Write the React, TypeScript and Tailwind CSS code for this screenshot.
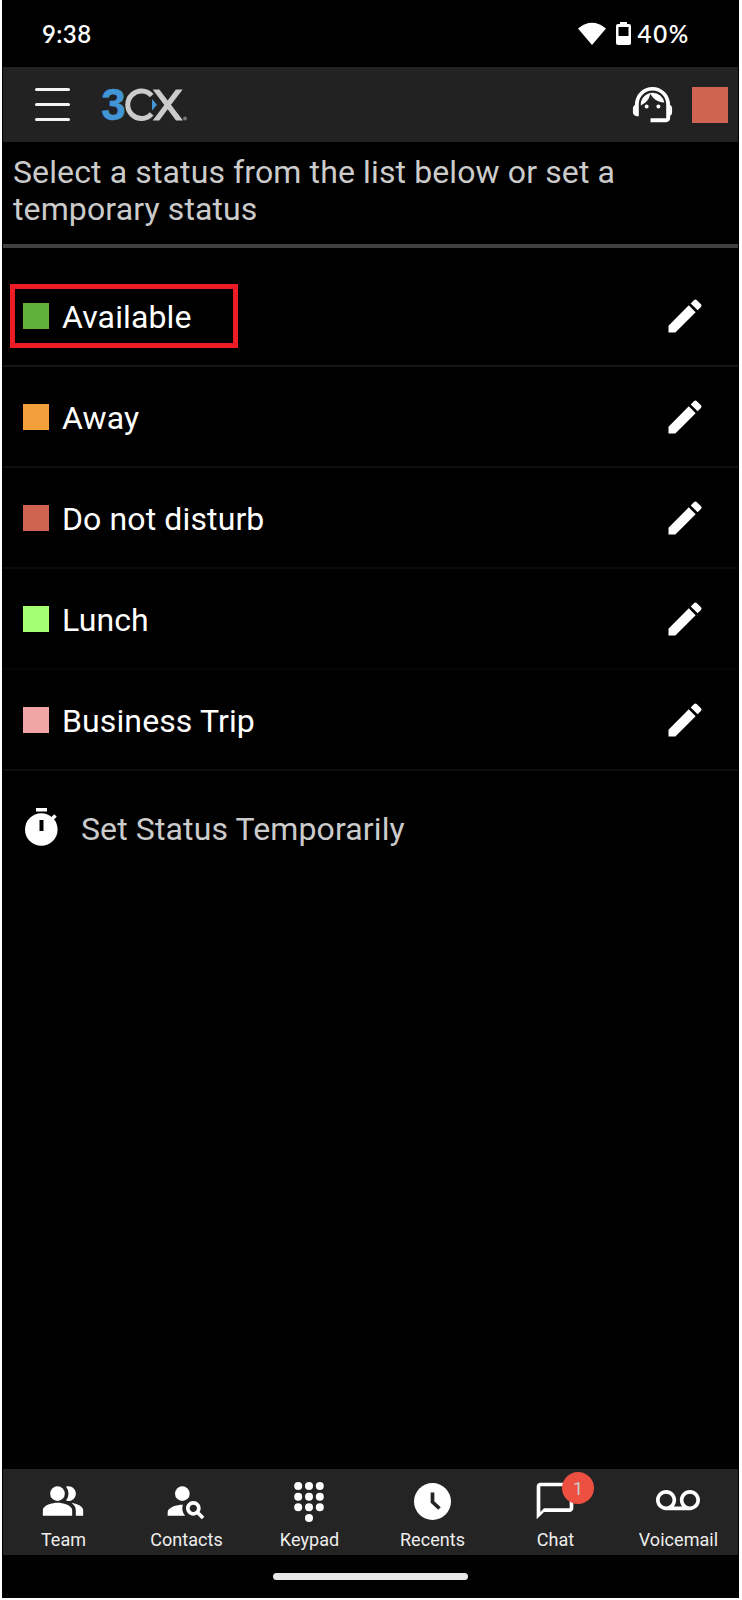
import React from 'react';
import { MdSupportAgent, MdEdit, MdPeopleAlt, MdPersonSearch, MdChatBubbleOutline, MdVoicemail } from 'react-icons/md';

const statuses = [
  { name: 'Available', swatch: 'bg-[#5fb139]', line: 'bg-[#161616]' },
  { name: 'Away', swatch: 'bg-[#f3a03c]', line: 'bg-[#101010]' },
  { name: 'Do not disturb', swatch: 'bg-[#d16353]', line: 'bg-[#0b0b0b]' },
  { name: 'Lunch', swatch: 'bg-[#a5ff75]', line: 'bg-[#060606]' },
  { name: 'Business Trip', swatch: 'bg-[#f2a5a5]', line: 'bg-[#0e0e0e]' },
];

function Logo() {
  return (
    <svg className="ml-8 h-[34px] w-[86px] overflow-visible" viewBox="0 0 86 34">
      <text x="-0.700" y="32" fontFamily="Liberation Sans, sans-serif" fontWeight="700" fontSize="44" fill="#4296d5" stroke="#4296d5" strokeWidth="0.500">3</text>
      <path d="M49.700 7.600A13.700 13.700 0 1 0 49.700 25.800" fill="none" stroke="#cbcbcb" strokeWidth="5" />
      <path d="M50 11L55 16.800L50 22.500Z" fill="#4296d5" />
      <path d="M50.700 1.500H57.300L65.700 12.500L73.900 1.500H80.700L69 16.800L81 32.500H74L65.700 21.300L57.300 32.500H50.700L62.300 17Z" fill="#cbcbcb" />
      <circle cx="83" cy="30.500" r="1.900" fill="#777" />
    </svg>
  );
}

function Keypad() {
  return (
    <svg className="mt-0.5 h-10 w-8 fill-white" viewBox="0 0 32 40">
      {[4, 14.7, 25.3].map((y) => [5.2, 16, 26.8].map((x) => <circle key={`${x}-${y}`} cx={x} cy={y} r="4" />))}
      <circle cx="16" cy="36" r="4" />
    </svg>
  );
}

function Clock() {
  return (
    <svg className="h-[37px] w-[37px]" viewBox="0 0 37 37">
      <circle cx="18.500" cy="18.500" r="18.500" fill="#fff" />
      <path d="M18.500 9.500V19L25.500 25.500" fill="none" stroke="#242424" strokeWidth="3.700" />
    </svg>
  );
}

function Stopwatch() {
  return (
    <svg className="ml-[21px] h-[40px] w-[36px]" viewBox="0 0 36 40">
      <rect x="12" y="1" width="11" height="3.500" fill="#fff" />
      <circle cx="17.300" cy="22.500" r="16.300" fill="#fff" />
      <path d="M28 12L31.500 8.500" stroke="#fff" strokeWidth="3.500" />
      <rect x="15.500" y="13" width="4" height="11" fill="#000" />
    </svg>
  );
}

const tabs = [
  { name: 'Team', icon: <MdPeopleAlt size={44} /> },
  { name: 'Contacts', icon: <MdPersonSearch size={44} /> },
  { name: 'Keypad', icon: <Keypad /> },
  { name: 'Recents', icon: <Clock /> },
  { name: 'Chat', icon: <MdChatBubbleOutline size={44} /> },
  { name: 'Voicemail', icon: <MdVoicemail size={44} /> },
];

export default function App() {
  return (
    <div className="h-[1600px] w-[742px] bg-white pr-[3px] pb-[2px] pl-[2px] font-[Roboto,sans-serif] text-white">
      <div className="flex h-full flex-col bg-black pr-px pl-px">
        <div className="flex h-[67px] shrink-0 items-center pr-[48px] pl-[39px] text-[24px] font-semibold">
          <span className="grow font-['Lato',sans-serif] tracking-[0.4px]">9:38</span>
          <svg className="h-[24px] w-[28px]" viewBox="0 0 28 24"><path d="M0 6.500Q14-5 28 6.500L14 23Z" fill="#fff" /></svg>
          <svg className="mr-[7px] ml-[10px] h-[23px] w-[15px]" viewBox="0 0 15 23"><path fillRule="evenodd" d="M4 0H11V2H13Q15 2 15 4V21Q15 23 13 23H2Q0 23 0 21V4Q0 2 2 2H4ZM2.500 5V14H12.500V5Z" fill="#fff" /></svg>
          <span className="font-['Lato',sans-serif] tracking-[1.7px]">40%</span>
        </div>
        <header className="flex h-[75px] shrink-0 items-center bg-[#222]">
          <div className="ml-8 flex w-[35px] flex-col gap-3">
            <span className="h-[3px] rounded-full bg-[#f4f4f4]" />
            <span className="h-[3px] rounded-full bg-[#f4f4f4]" />
            <span className="h-[3px] rounded-full bg-[#f4f4f4]" />
          </div>
          <Logo />
          <MdSupportAgent className="mr-[16px] ml-auto" size={47} />
          <div className="mr-[10px] h-9 w-9 bg-[#d16353]" />
        </header>
        <p className="h-[102px] shrink-0 pt-[12px] pl-[10px] text-[32px] leading-[37px] tracking-[0.12px] text-[#cbcbcb]">Select a status from the list below or set a<br />temporary status</p>
        <div className="h-1 shrink-0 bg-[#414141]" />
        <ul className="pt-[18px]">
          {statuses.map((s, i) => (
            <li key={s.name} className="relative flex h-[101px] flex-col">
              {i === 0 && <div className="absolute top-[18px] left-[7px] h-[64px] w-[228px] border-5 border-[#ed1c24]" />}
              <div className="flex grow items-center pl-5">
                <span className={`h-[26px] w-[26px] ${s.swatch}`} />
                <span className="ml-[13px] grow pt-0.5 text-[32px] tracking-[0.12px]">{s.name}</span>
                <MdEdit className="mr-[31px]" size={44} />
              </div>
              <div className={`h-0.5 ${s.line}`} />
            </li>
          ))}
        </ul>
        <div className="flex h-[112px] items-center text-[#cbcbcb]">
          <Stopwatch />
          <span className="ml-[21px] pt-1 text-[32px] tracking-[0.12px]">Set Status Temporarily</span>
        </div>
        <nav className="mt-auto h-[86px] shrink-0 bg-[#242424]">
          <div className="-mx-px flex">
            {tabs.map((t) => (
              <div key={t.name} className="relative flex w-[123px] shrink-0 flex-col items-center">
                <div className="mr-px flex h-[58px] items-center pt-1.5">{t.icon}</div>
                <span className="text-[18px] leading-[26px] tracking-[0.05px] text-[#eee]">{t.name}</span>
                {t.name === 'Chat' && <span className="absolute top-[3px] left-[68px] flex h-8 w-8 items-center justify-center rounded-full bg-[#ed4f40] text-[18px] text-[#ccc]">1</span>}
              </div>
            ))}
          </div>
        </nav>
        <div className="flex h-[43px] shrink-0 justify-center pt-[18px]"><div className="h-[7px] w-[195px] rounded-full bg-[#e8e6e8]" /></div>
      </div>
    </div>
  );
}
